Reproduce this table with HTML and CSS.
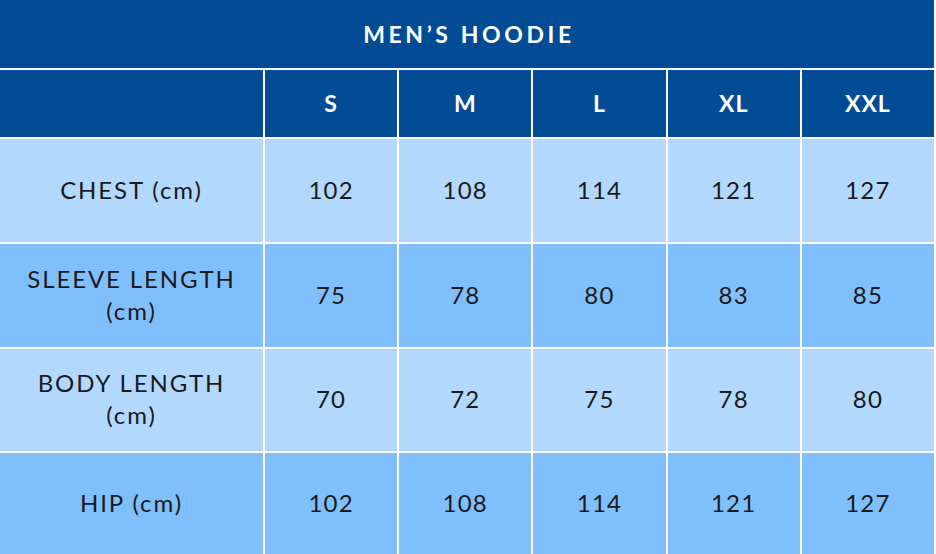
FILE: index.html
```html
<!DOCTYPE html>
<html>
<head>
<meta charset="utf-8">
<link rel="stylesheet" href="styles.css">
</head>
<body>
<div class="chart">
  <div class="title">MEN’S HOODIE</div>
  <div class="grid">
    <div class="cell head"></div>
    <div class="cell head">S</div>
    <div class="cell head">M</div>
    <div class="cell head">L</div>
    <div class="cell head">XL</div>
    <div class="cell head">XXL</div>

    <div class="cell light label">CHEST (cm)</div>
    <div class="cell light">102</div>
    <div class="cell light">108</div>
    <div class="cell light">114</div>
    <div class="cell light">121</div>
    <div class="cell light">127</div>

    <div class="cell mid label">SLEEVE LENGTH<br>(cm)</div>
    <div class="cell mid">75</div>
    <div class="cell mid">78</div>
    <div class="cell mid">80</div>
    <div class="cell mid">83</div>
    <div class="cell mid">85</div>

    <div class="cell light label">BODY LENGTH<br>(cm)</div>
    <div class="cell light">70</div>
    <div class="cell light">72</div>
    <div class="cell light">75</div>
    <div class="cell light">78</div>
    <div class="cell light">80</div>

    <div class="cell mid label">HIP (cm)</div>
    <div class="cell mid">102</div>
    <div class="cell mid">108</div>
    <div class="cell mid">114</div>
    <div class="cell mid">121</div>
    <div class="cell mid">127</div>
  </div>
</div>
</body>
</html>
```
FILE: styles.css
```css
html, body {
  margin: 0;
  padding: 0;
  background: #ffffff;
}
body {
  font-family: "Lato", "Liberation Sans", sans-serif;
  width: 936px;
  height: 554px;
  overflow: hidden;
}
.chart {
  width: 934px;
  display: flex;
  flex-direction: column;
  gap: 2px;
}
.title {
  height: 68px;
  background: #024c95;
  color: #ffffff;
  font-weight: 700;
  font-size: 23px;
  letter-spacing: 3.6px;
  display: flex;
  align-items: center;
  justify-content: center;
  padding-left: 4px;
}
.grid {
  display: grid;
  grid-template-columns: 263px repeat(5, 1fr);
  grid-template-rows: 67px 103px 103px 102px 102px;
  gap: 2px;
}
.cell {
  display: flex;
  align-items: center;
  justify-content: center;
  text-align: center;
  font-size: 24px;
  letter-spacing: 1.2px;
  color: #1a1a1a;
  line-height: 32px;
  padding-bottom: 2px;
}
.head {
  background: #024c95;
  color: #ffffff;
  font-weight: 700;
  font-size: 23px;
  letter-spacing: 1px;
}
.light {
  background: #b3d8fd;
}
.mid {
  background: #80bffd;
}
.label {
  letter-spacing: 1.9px;
}
```
